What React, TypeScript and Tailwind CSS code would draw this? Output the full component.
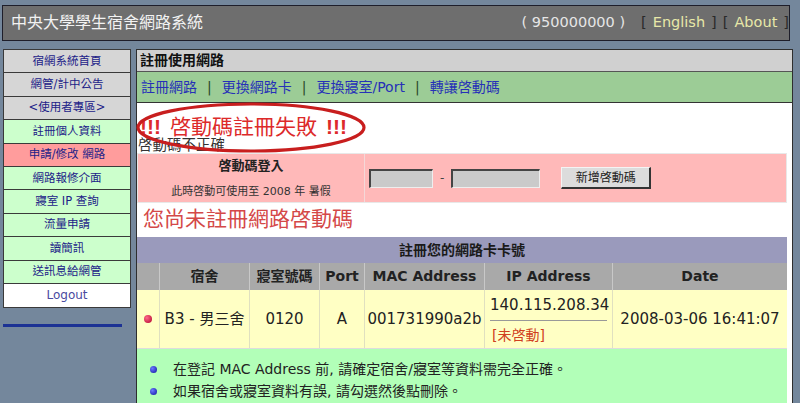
import React from "react";

const font = { fontFamily: '"DejaVu Sans", "Noto Sans CJK TC", sans-serif' };
const arial = { fontFamily: '"Liberation Sans", sans-serif' };

const menu = [
  { label: "宿網系統首頁", bg: "bg-[#d6d6d6]" },
  { label: "網管/計中公告", bg: "bg-[#d6d6d6]" },
  { label: "<使用者專區>", bg: "bg-[#d6d6d6]" },
  { label: "註冊個人資料", bg: "bg-[#ccffcc]" },
  { label: "申請/修改 網路", bg: "bg-[#ff9c9c]" },
  { label: "網路報修介面", bg: "bg-[#ccffcc]" },
  { label: "寢室 IP 查詢", bg: "bg-[#ccffcc]" },
  { label: "流量申請", bg: "bg-[#ccffcc]" },
  { label: "讀簡訊", bg: "bg-[#ccffcc]" },
  { label: "送訊息給網管", bg: "bg-[#ccffcc]" },
];

export default function App() {
  return (
    <div className="min-h-screen bg-[#74879c] pt-[5px] pl-[2px] text-[#222]" style={font}>
      {/* Header */}
      <div className="w-[788px] h-[36px] bg-[#6e6e6e] border border-[#1e1e2a] flex items-center justify-between pl-[8px] pr-0">
        <div className="text-[16px] text-[#f2f2f2]">中央大學學生宿舍網路系統</div>
        <div className="flex items-center text-[14.5px] text-[#e6e6e6]">
          <span className="mr-[16px]">( 950000000 )</span>
          <span className="text-[#2a2a2a]">[</span>
          <span className="mx-[6px] text-[#e8e8a8]">English</span>
          <span className="text-[#2a2a2a]">]</span>
          <span className="ml-[6px] text-[#2a2a2a]">[</span>
          <span className="mx-[6px] text-[#e8e8a8]">About</span>
          <span className="text-[#2a2a2a]">]</span>
        </div>
      </div>

      <div className="flex mt-[8px]">
        {/* Sidebar */}
        <div className="ml-[1px] w-[128px]">
          <div className="border border-[#3a3a3a]">
            {menu.map((m) => (
              <div
                key={m.label}
                className={`${m.bg} h-[23.4px] border-b border-[#3a3a3a] flex items-center justify-center text-[11.5px] text-[#1c2288]`}
              >
                {m.label}
              </div>
            ))}
            <div className="bg-white h-[23px] flex items-center justify-center text-[12px] text-[#4a4aa0]">
              Logout
            </div>
          </div>
          <div className="mt-[16px] w-[119px] h-[3px] bg-[#1c3294]" />
        </div>

        {/* Main */}
        <div className="ml-[5px] w-[657px] border border-[#2e2e2e] bg-white relative">
          <div className="h-[22px] bg-[#d0d0d0] border-b border-[#555] flex items-center pl-[3px] text-[14px] font-bold text-[#111]">
            註冊使用網路
          </div>
          <div className="h-[31px] bg-[#9ccc96] border-b border-[#333] flex items-center pl-[4px] text-[14px] text-[#2630b8]">
            <span>註冊網路</span>
            <span className="mx-[10px] text-[#2a4a2a]">|</span>
            <span>更換網路卡</span>
            <span className="mx-[10px] text-[#2a4a2a]">|</span>
            <span>更換寢室/Port</span>
            <span className="mx-[10px] text-[#2a4a2a]">|</span>
            <span>轉讓啓動碼</span>
          </div>

          <div className="pr-[5px]">
            {/* Message */}
            <div className="h-[50px] pl-[3px] relative">
              <div className="pt-[12px] h-[35px] text-[21px] leading-[24px] text-[#dd2a2a]">
                <span className="font-bold" style={arial}>!!!</span>
                <span className="ml-[9px] mr-[9px]">啓動碼註冊失敗</span>
                <span className="font-bold" style={arial}>!!!</span>
              </div>
              <div className="text-[14.5px] leading-[15px] text-[#333] -ml-[2px]">啓動碼不正確</div>
              <svg className="absolute left-[-2px] top-[-1px]" width="232" height="52" viewBox="0 0 232 52">
                <ellipse cx="116" cy="25.5" rx="113" ry="23.5" fill="none" stroke="#c81e1e" strokeWidth="3.2" />
              </svg>
            </div>

            {/* Pink activation row */}
            <div className="h-[50px] bg-[#ffb9b9] border border-[#e8e8e8] flex">
              <div className="w-[227px] border-r border-[#f4d8d8] flex flex-col items-center justify-center">
                <div className="text-[13px] font-bold text-[#222]">啓動碼登入</div>
                <div className="text-[11px] mt-[8px] text-[#333]">此時啓動可使用至 2008 年 暑假</div>
              </div>
              <div className="flex items-center pl-[4px]">
                <div className="w-[64px] h-[19px] bg-[#cacaca] border-t-2 border-l-2 border-[#444] border-b border-r border-b-[#eee] border-r-[#eee]" />
                <span className="mx-[7px] text-[12px] text-[#444]">-</span>
                <div className="w-[89px] h-[19px] bg-[#cacaca] border-t-2 border-l-2 border-[#444] border-b border-r border-b-[#eee] border-r-[#eee]" />
                <div className="ml-[21px] w-[90px] h-[22px] bg-[#dcdcdc] border border-t-[#f4f4f4] border-l-[#f4f4f4] border-b-2 border-r-2 border-b-[#333] border-r-[#333] flex items-center justify-center text-[12px] text-[#222]">
                  新增啓動碼
                </div>
              </div>
            </div>

            {/* Not registered */}
            <div className="h-[34px] flex items-center pl-[6px] text-[21px] text-[#d44848]">
              您尚未註冊網路啓動碼
            </div>

            {/* Purple header */}
            <div className="h-[26px] bg-[#9a9abc] flex items-center justify-center text-[14px] font-bold text-[#1a1a1a]">
              註冊您的網路卡卡號
            </div>

            {/* Table header */}
            <div className="grid grid-cols-[23px_90px_70px_45px_120px_128px_174px] h-[27px] bg-[#a9a9a9] text-[14px] font-bold text-[#222]">
              <div className="border-r border-[#c8c8c8]" />
              <div className="border-r border-[#c8c8c8] flex items-center justify-center">宿舍</div>
              <div className="border-r border-[#c8c8c8] flex items-center justify-center">寢室號碼</div>
              <div className="border-r border-[#c8c8c8] flex items-center justify-center">Port</div>
              <div className="border-r border-[#c8c8c8] flex items-center justify-center">MAC Address</div>
              <div className="border-r border-[#c8c8c8] flex items-center justify-center">IP Address</div>
              <div className="flex items-center justify-center">Date</div>
            </div>

            {/* Data row */}
            <div className="grid grid-cols-[23px_90px_70px_45px_120px_128px_174px] h-[59px] bg-[#ffffc4] text-[15px] text-[#222] border-b border-[#ddd]">
              <div className="border-r border-[#e0e0c0] flex items-center justify-center">
                <span className="w-[8px] h-[8px] rounded-full bg-[radial-gradient(circle_at_35%_35%,#ff6a8a,#b0002a)]" />
              </div>
              <div className="border-r border-[#e0e0c0] flex items-center justify-center">B3 - 男三舍</div>
              <div className="border-r border-[#e0e0c0] flex items-center justify-center">0120</div>
              <div className="border-r border-[#e0e0c0] flex items-center justify-center">A</div>
              <div className="border-r border-[#e0e0c0] flex items-center justify-center">001731990a2b</div>
              <div className="border-r border-[#e0e0c0] flex flex-col justify-center px-[5px]">
                <div className="text-center leading-[20px]">140.115.208.34</div>
                <div className="h-[1px] bg-[#999] my-[5px]" />
                <div className="text-[14px] leading-[18px] text-[#d04020] pl-[2px]">[未啓動]</div>
              </div>
              <div className="flex items-center justify-center">2008-03-06 16:41:07</div>
            </div>

            {/* Notes */}
            <div className="bg-[#b2ffb8] pt-[9px] pb-[10px] text-[14px] text-[#222]">
              <div className="flex items-center h-[22px]">
                <span className="ml-[13px] mr-[16px] w-[7px] h-[7px] rounded-full bg-[radial-gradient(circle_at_35%_35%,#6a7aff,#1010a0)]" />
                在登記 MAC Address 前, 請確定宿舍/寢室等資料需完全正確。
              </div>
              <div className="flex items-center h-[22px]">
                <span className="ml-[13px] mr-[16px] w-[7px] h-[7px] rounded-full bg-[radial-gradient(circle_at_35%_35%,#6a7aff,#1010a0)]" />
                如果宿舍或寢室資料有誤, 請勾選然後點刪除。
              </div>
            </div>
          </div>
        </div>
      </div>
    </div>
  );
}
